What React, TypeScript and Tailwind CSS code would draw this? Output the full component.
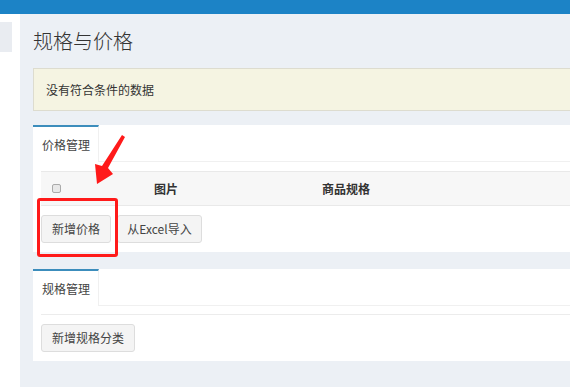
import React from 'react';

const font = { fontFamily: '"Noto Sans CJK SC", "Noto Sans", sans-serif' };

const Btn = ({ label, w }: { label: string; w: string }) => (
  <button
    className={`h-[28px] ${w} bg-[#f4f4f4] border border-[#dddddd] rounded-[3px] text-[12px] text-[#444] flex items-center justify-center`}
  >
    {label}
  </button>
);

const Tab = ({ label }: { label: string }) => (
  <div className="flex border-b border-[#f0f0f0] h-[37px]">
    <div className="w-[66px] h-[37px] bg-white border-t-2 border-[#3c8dbc] border-r border-r-[#f0f0f0] flex items-center pl-[9px] text-[12px] text-[#444]">
      {label}
    </div>
  </div>
);

const App = () => {
  return (
    <div className="w-[570px] h-[387px] overflow-hidden flex flex-col bg-[#ecf0f5] relative" style={font}>
      {/* top bar */}
      <div className="h-[14px] bg-[#1c83c6] shrink-0" />

      <div className="flex flex-1">
        {/* sidebar */}
        <div className="w-[20px] bg-white shrink-0 pt-[8px]">
          <div className="w-[12px] h-[30px] bg-[#e9ecf1]" />
        </div>

        {/* main */}
        <div className="flex-1 pl-[13px] pt-[13px]">
          <div className="w-[560px]">
            <h1 className="text-[20px] leading-[28px] text-[#333] font-light">规格与价格</h1>

            <div className="mt-[13px] h-[43px] bg-[#f5f4e2] border border-[#dddccf] flex items-center pl-[12px] text-[12px] text-[#333]">
              没有符合条件的数据
            </div>

            {/* price panel */}
            <div className="mt-[14px] bg-white h-[127px]">
              <Tab label="价格管理" />
              <div className="px-[8px] pt-[9px]">
                <div className="h-[35px] bg-[#f7f7f7] border-y border-[#e9e9e9] flex items-center text-[12px] font-bold text-[#333]">
                  <div className="w-[30px] flex justify-center">
                    <span className="w-[9px] h-[9px] border border-[#aaa] rounded-[2px] bg-[#e8e8e8]" />
                  </div>
                  <div className="w-[190px] text-center">图片</div>
                  <div className="w-[170px] text-center">商品规格</div>
                </div>
                <div className="flex gap-[6px] mt-[9px]">
                  <Btn label="新增价格" w="w-[70px]" />
                  <Btn label="从Excel导入" w="w-[85px]" />
                </div>
              </div>
            </div>

            {/* spec panel */}
            <div className="mt-[17px] bg-white h-[92px]">
              <Tab label="规格管理" />
              <div className="px-[8px] pt-[8px]">
                <div className="border-t border-[#ececec]" />
                <div className="mt-[9px] flex">
                  <Btn label="新增规格分类" w="w-[94px]" />
                </div>
              </div>
            </div>
          </div>
        </div>
      </div>

      {/* annotation: red box */}
      <div className="absolute left-[37px] top-[198px] w-[81px] h-[59px] border-[3px] border-[#ff1a1a] rounded-[3px]" />

      {/* annotation: arrow */}
      <svg className="absolute left-0 top-0" width="570" height="387" viewBox="0 0 570 387">
        <polygon
          points="122,135 125,137 108,168 113,174 97,184 95,164 102,166"
          fill="#ff1a1a"
        />
      </svg>
    </div>
  );
};

export default App;
